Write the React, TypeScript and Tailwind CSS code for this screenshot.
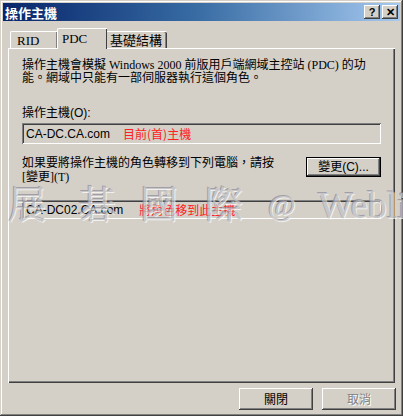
import React from 'react';

const raised =
  'shadow-[inset_-1px_-1px_#404040,inset_1px_1px_#ffffff,inset_-2px_-2px_#808080,inset_2px_2px_#d4d0c8]';
const sunken =
  'shadow-[inset_1px_1px_#808080,inset_-1px_-1px_#ffffff,inset_2px_2px_#404040,inset_-2px_-2px_#d4d0c8]';

const font = { fontFamily: '"Liberation Serif", "Noto Sans CJK TC", serif' };

function TitleButton({ children }: { children: React.ReactNode }) {
  return (
    <div
      className={`w-[16px] h-[14px] bg-[#d4d0c8] ${raised} flex items-center justify-center text-[11px] font-bold text-black leading-none`}
      style={{ fontFamily: '"Liberation Sans", sans-serif' }}
    >
      {children}
    </div>
  );
}

export default function App() {
  return (
    <div
      className="w-[403px] h-[416px] overflow-hidden bg-[#d4d0c8] flex flex-col p-[3px] shadow-[inset_-1px_-1px_#404040,inset_1px_1px_#d4d0c8,inset_-2px_-2px_#808080,inset_2px_2px_#ffffff] text-black"
      style={font}
    >
      {/* Title bar */}
      <div className="h-[18px] flex items-center justify-between pl-[2px] pr-[2px] bg-gradient-to-r from-[#0a246a] via-[#3a6ea5] to-[#a6caf0]">
        <span
          className="text-white text-[13px] font-bold leading-none"
          style={{ fontFamily: '"Noto Sans CJK TC", sans-serif' }}
        >
          操作主機
        </span>
        <div className="flex items-center gap-[2px]">
          <TitleButton>?</TitleButton>
          <TitleButton>✕</TitleButton>
        </div>
      </div>

      {/* Tabs */}
      <div className="flex items-end h-[25px] pl-[7px] mt-[2px]">
        <div className="h-[17px] w-[47px] border-t border-l border-white rounded-tl-[2px] shadow-[inset_-1px_0_#808080] flex items-center pl-[6px] text-[13px] leading-none">
          RID
        </div>
        <div className="relative z-10 h-[21px] w-[50px] -mb-[1px] bg-[#d4d0c8] border-t border-l border-white rounded-tl-[2px] shadow-[inset_-1px_0_#404040] flex items-start pt-[2px] pl-[4px] text-[13px] leading-[16px]">
          PDC
        </div>
        <div className="h-[17px] w-[60px] border-t border-white rounded-tr-[2px] shadow-[inset_-1px_0_#404040,inset_-2px_0_#808080] flex items-center pl-[3px] text-[13px] leading-none">
          基礎結構
        </div>
      </div>

      {/* Panel */}
      <div className="mx-[5px] h-[335px] border-t border-l border-white shadow-[inset_-1px_-1px_#404040,inset_-2px_-2px_#808080] pl-[13px] pr-[14px] pt-[10px] flex flex-col text-[12px]">
        <p className="leading-[13px]">
          操作主機會模擬 Windows 2000 前版用戶端網域主控站 (PDC) 的功
          <br />
          能。網域中只能有一部伺服器執行這個角色。
        </p>

        <div className="mt-[22px] leading-[13px]" style={{ fontFamily: '"Liberation Sans", "Noto Sans CJK TC", sans-serif' }}>
          操作主機(O):
        </div>
        <div className={`mt-[3px] h-[21px] ${sunken} flex items-center pl-[4px] gap-[13px]`}>
          <span className="text-[12px]" style={{ fontFamily: '"Liberation Sans", sans-serif' }}>
            CA-DC.CA.com
          </span>
          <span className="text-[#ff2020] text-[12px]" style={{ fontFamily: '"Noto Sans CJK TC", sans-serif' }}>
            目前(首)主機
          </span>
        </div>

        <div className="mt-[12px] flex items-start justify-between">
          <p className="leading-[14px]">
            如果要將操作主機的角色轉移到下列電腦，請按
            <br />
            [變更](T)
          </p>
          <div className="mt-[1px] w-[75px] h-[20px] border border-black">
            <div
              className={`w-full h-full ${raised} flex items-center justify-center text-[12px]`}
              style={{ fontFamily: '"Liberation Sans", "Noto Sans CJK TC", sans-serif' }}
            >
              變更(C)...
            </div>
          </div>
        </div>

        <div className="relative mt-[16px]">
          <div className={`h-[19px] ${sunken} flex items-center pl-[4px] gap-[16px]`}>
            <span className="text-[12px]" style={{ fontFamily: '"Liberation Sans", sans-serif' }}>
              CA-DC02.CA.com
            </span>
            <span className="text-[#ff2020] text-[12px]" style={{ fontFamily: '"Noto Sans CJK TC", sans-serif' }}>
              將角色移到此主機
            </span>
          </div>
          {/* watermark */}
          <div
            className="absolute -left-[14px] -top-[14px] flex items-center text-[38px] leading-none text-[#c4c4c8] opacity-70 whitespace-nowrap pointer-events-none [text-shadow:1px_1px_0_#ffffff,-1px_-1px_0_#8c8a9c]"
            style={{ fontFamily: '"Liberation Serif", "Noto Serif CJK TC", "Noto Sans CJK TC", serif' }}
          >
            <span className="w-[70px]">展</span>
            <span className="w-[62px]">碁</span>
            <span className="w-[65px]">國</span>
            <span className="w-[63px]">際</span>
            <span className="w-[50px] text-[30px]">@</span>
            <span>Weblink</span>
          </div>
        </div>
      </div>

      {/* Bottom buttons */}
      <div className="flex justify-end gap-[9px] pr-[4px] mt-[5px]">
        <div
          className={`w-[74px] h-[22px] ${raised} flex items-center justify-center text-[12px]`}
          style={{ fontFamily: '"Noto Sans CJK TC", sans-serif' }}
        >
          關閉
        </div>
        <div
          className={`w-[74px] h-[22px] ${raised} flex items-center justify-center text-[12px] text-[#808080] [text-shadow:1px_1px_0_#ffffff]`}
          style={{ fontFamily: '"Noto Sans CJK TC", sans-serif' }}
        >
          取消
        </div>
      </div>
    </div>
  );
}
